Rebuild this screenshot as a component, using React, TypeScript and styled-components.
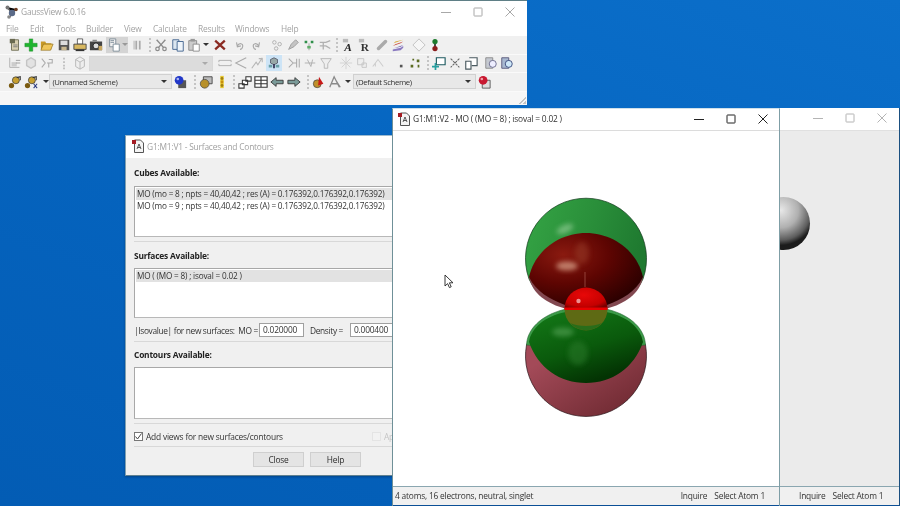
import * as React from "react";
import styled, { createGlobalStyle } from "styled-components";

const GlobalStyle = createGlobalStyle`
  html, body {
    margin: 0;
    padding: 0;
    background: #0563bd;
    overflow: hidden;
  }
  * {
    box-sizing: border-box;
  }
`;

const Desktop = styled.div`
  position: relative;
  width: 900px;
  height: 506px;
  overflow: hidden;
  background: linear-gradient(200deg, #0b6fca 0%, #0564bf 50%, #035cb4 100%);
  font-family: "Open Sans", "Noto Sans", sans-serif;
  font-size: 8.4px;
  letter-spacing: -0.2px;
  color: #2b2b2b;
  filter: blur(0.35px);
`;

/* windows on a desktop: the place is the content */
const Window = styled.div<{ $x: number; $y: number; $w: number; $h: number; $z: number }>`
  position: absolute;
  left: ${(p) => p.$x}px;
  top: ${(p) => p.$y}px;
  width: ${(p) => p.$w}px;
  height: ${(p) => p.$h}px;
  z-index: ${(p) => p.$z};
  display: flex;
  flex-direction: column;
  overflow: hidden;
  background: #f0f0f0;
`;

const MainWindow = styled(Window)`
  border-top: 1px solid #5f7f86;
  background: #f5f5f5;
`;

const ViewWindow = styled(Window)`
  border-left: 1px solid #6f9098;
  border-right: 1px solid #7f9ea6;
  border-top: 1px solid #cfe0ea;
  background: #fff;
`;

const BackWindow = styled(Window)`
  background: #ebebeb;
  border-right: 1px solid #1a4f80;
`;

const DialogWindow = styled(Window)`
  border-left: 1px solid #7fa0b0;
  border-top: 1px solid #9dbbd0;
  border-bottom: 1px solid #5f8090;
  box-shadow: 0 1px 2px rgba(0, 30, 70, 0.4);
`;

const TitleBar = styled.div<{ $h: number; $pad: number; $pb?: number; $active?: boolean }>`
  flex: none;
  height: ${(p) => p.$h}px;
  padding-left: ${(p) => p.$pad}px;
  padding-bottom: ${(p) => p.$pb ?? 0}px;
  display: flex;
  align-items: center;
  gap: 3px;
  background: #fff;
  color: ${(p) => (p.$active ? "#333" : "#a0a0a0")};
`;

const TitleText = styled.span`
  flex: 1;
  white-space: nowrap;
`;

const Controls = styled.div<{ $gap: number; $right: number; $color: string }>`
  display: flex;
  align-items: center;
  gap: ${(p) => p.$gap}px;
  margin-right: ${(p) => p.$right}px;
  color: ${(p) => p.$color};
`;

const MenuBar = styled.div`
  flex: none;
  height: 14px;
  padding-bottom: 2px;
  display: flex;
  align-items: center;
  background: #fff;
  color: #a3a3a3;
`;

const MenuItem = styled.span<{ $w: number }>`
  width: ${(p) => p.$w}px;
  padding-left: 6px;
  white-space: nowrap;
`;

const ToolRow = styled.div`
  flex: none;
  height: 18.5px;
  padding-left: 7px;
  display: flex;
  align-items: center;
  background: #f0f0f0;
  border-bottom: 1px solid #fafafa;
`;

const Slot = styled.div<{ $ml?: number; $hi?: boolean }>`
  flex: none;
  width: 16.2px;
  height: 16px;
  margin-left: ${(p) => p.$ml ?? 0}px;
  display: flex;
  align-items: center;
  justify-content: center;
  background: ${(p) => (p.$hi ? "#cde4f6" : "transparent")};
`;

const HiBox = styled.div`
  flex: none;
  width: 22px;
  height: 16px;
  margin-left: 2px;
  display: flex;
  align-items: center;
  background: #d4d4d4;
`;

const Grip = styled.div<{ $ml?: number }>`
  flex: none;
  width: 2px;
  height: 14px;
  margin-left: ${(p) => p.$ml ?? 0}px;
  border-left: 2px dotted #c4c4c4;
`;

const DropArrow = styled.div<{ $ml?: number; $color?: string }>`
  flex: none;
  width: 0;
  height: 0;
  margin-left: ${(p) => p.$ml ?? 0}px;
  border-left: 3px solid transparent;
  border-right: 3px solid transparent;
  border-top: 3px solid ${(p) => p.$color ?? "#333"};
`;

const Combo = styled.div<{ $w: number; $ml?: number; $off?: boolean }>`
  flex: none;
  width: ${(p) => p.$w}px;
  height: 15px;
  margin-left: ${(p) => p.$ml ?? 0}px;
  padding: 0 4px 0 2px;
  display: flex;
  align-items: center;
  justify-content: space-between;
  background: ${(p) => (p.$off ? "#dcdcdc" : "#e8e8e8")};
  border: 1px solid ${(p) => (p.$off ? "#d8d8d8" : "#d0d0d0")};
  font-size: 7.8px;
  letter-spacing: -0.4px;
  color: #333;
  white-space: nowrap;
`;

const Fill = styled.div`
  flex: 1;
  position: relative;
  background: #f6f6f6;
`;

const SizeGrip = styled.div`
  position: absolute;
  right: 1px;
  bottom: 1px;
  width: 8px;
  height: 8px;
  background: linear-gradient(135deg, transparent 55%, #c4c4c4 55%, #c4c4c4 65%, transparent 65%, transparent 78%, #c4c4c4 78%);
`;

const DialogBody = styled.div`
  flex: 1;
  padding: 0 0 0 8px;
  display: flex;
  flex-direction: column;
`;

const GroupTitle = styled.div<{ $mt: number }>`
  margin-top: ${(p) => p.$mt}px;
  height: 12px;
  line-height: 12px;
  font-weight: 700;
  color: #222;
`;

const ListBox = styled.div<{ $h: number; $mt: number }>`
  flex: none;
  width: 270px;
  height: ${(p) => p.$h}px;
  margin-top: ${(p) => p.$mt}px;
  padding: 1px;
  background: #fff;
  border: 1px solid #a8a8a8;
  border-right: none;
  border-bottom-color: #b8b8b8;
`;

const ListRow = styled.div<{ $sel?: boolean }>`
  height: 12px;
  line-height: 12px;
  padding-left: 1px;
  white-space: nowrap;
  background: ${(p) => (p.$sel ? "#e2e2e2" : "transparent")};
  font-size: 8.2px;
  letter-spacing: -0.18px;
  color: #333;
`;

const Rule = styled.div<{ $mt: number }>`
  flex: none;
  width: 260px;
  height: 1px;
  margin-top: ${(p) => p.$mt}px;
  background: #d8d8d8;
`;

const IsoRow = styled.div`
  flex: none;
  height: 14px;
  margin-top: 5px;
  display: flex;
  align-items: center;
  white-space: nowrap;
  color: #333;
`;

const IsoLabel = styled.span<{ $w: number; $pl?: number }>`
  flex: none;
  width: ${(p) => p.$w}px;
  padding-left: ${(p) => p.$pl ?? 0}px;
  letter-spacing: -0.35px;
`;

const NumberBox = styled.div`
  flex: none;
  width: 45px;
  height: 14px;
  padding-left: 3px;
  line-height: 12px;
  background: #fff;
  border: 1px solid #a0a0a0;
`;

const CheckRow = styled.div`
  flex: none;
  height: 10px;
  margin-top: 7px;
  display: flex;
  align-items: center;
  gap: 3px;
  white-space: nowrap;
`;

const CheckBox = styled.div<{ $off?: boolean }>`
  flex: none;
  width: 9px;
  height: 9px;
  display: flex;
  align-items: center;
  justify-content: center;
  background: ${(p) => (p.$off ? "#f2f2f2" : "#fff")};
  border: 1px solid ${(p) => (p.$off ? "#e4e4e4" : "#777")};
`;

const CheckText = styled.span<{ $w?: number; $off?: boolean }>`
  flex: none;
  width: ${(p) => (p.$w ? `${p.$w}px` : "auto")};
  color: ${(p) => (p.$off ? "#c4c4c4" : "#333")};
`;

const ButtonRow = styled.div`
  flex: none;
  margin-top: 5px;
  padding-left: 119px;
  display: flex;
  gap: 6px;
`;

const Button = styled.div`
  width: 51px;
  height: 15px;
  line-height: 13px;
  text-align: center;
  background: #e4e4e4;
  border: 1px solid #cfcfcf;
`;

const ViewCanvas = styled.div`
  flex: 1;
  position: relative;
  background: #fff;
  border-top: 1px solid #dcdcdc;
`;

const BackCanvas = styled.div`
  flex: 1;
  position: relative;
  background: #ebebeb;
  border-top: 1px solid #e0e0e0;
`;

const StatusBar = styled.div<{ $pl: number }>`
  flex: none;
  height: 20px;
  padding: 0 14px 2px ${(p) => p.$pl}px;
  display: flex;
  align-items: center;
  background: #f0f0f0;
  border-top: 1px solid #8aa6b0;
  border-bottom: 1px solid #0b4f96;
  color: #333;
  white-space: nowrap;
`;

const StatusLeft = styled.span`
  flex: 1;
`;

const StatusCell = styled.span<{ $ml: number }>`
  margin-left: ${(p) => p.$ml}px;
`;

const MoleculeSvg = styled.svg`
  position: absolute;
  left: 119px;
  top: 37px;
  width: 280px;
  height: 300px;
`;

const AtomSvg = styled.svg`
  position: absolute;
  left: 0;
  top: 59px;
  width: 40px;
  height: 70px;
`;

const Cursor = styled.svg`
  position: absolute;
  left: 444px;
  top: 274px;
  z-index: 9;
`;

const Icon16 = ({ children }: { children: React.ReactNode }) => (
  <svg width="14" height="14" viewBox="0 0 16 16" fill="none">
    {children}
  </svg>
);

const Molecule3 = (
  <>
    <circle cx="4" cy="12" r="3" fill="#7a5a10" />
    <circle cx="9" cy="6" r="4" fill="#c8a030" stroke="#333" strokeWidth="0.8" />
    <path d="M10 3l4-1v4" stroke="#333" strokeWidth="1.2" />
  </>
);

const icons: Record<string, React.ReactNode> = {
  newdoc: (
    <>
      <path d="M4 2h8v12H4z" fill="#d8cfb0" stroke="#6a6a50" />
      <path d="M2 1h6v5H2z" fill="#6a6a50" />
      <path d="M6 8h5M6 10h5" stroke="#777" />
    </>
  ),
  plus: <path d="M6 1h4v5h5v4h-5v5H6v-5H1V6h5z" fill="#1fb52f" stroke="#128020" strokeWidth="0.5" />,
  folder: (
    <>
      <path d="M1 4h5l1 2h6v7H1z" fill="#c89a28" />
      <path d="M4 7h11l-3 7H1z" fill="#efc65a" stroke="#8a6a18" strokeWidth="0.7" />
    </>
  ),
  save: (
    <>
      <path d="M2 2h12v12H2z" fill="#555" />
      <path d="M4 3h8v5H4z" fill="#ddd" />
      <path d="M5 10h6v4H5z" fill="#c9b890" />
    </>
  ),
  print: (
    <>
      <path d="M5 1h6v6H5z" fill="#fff" stroke="#555" />
      <path d="M1 7h14v6H1z" fill="#d8b860" stroke="#444" />
      <path d="M3 13h10v2H3z" fill="#333" />
    </>
  ),
  camera: (
    <>
      <path d="M1 4h14v10H1z" fill="#444" />
      <circle cx="8" cy="9" r="3.4" fill="#ddd" stroke="#222" />
      <path d="M4 2h5v2H4z" fill="#888" />
      <path d="M11 9h4v5h-4z" fill="#c9a860" />
    </>
  ),
  graydoc: (
    <>
      <path d="M3 1h7v9H3z" fill="#f0f0f0" stroke="#7a8a96" />
      <path d="M7 7h7v8H7z" fill="#fff" stroke="#7a8a96" />
      <path d="M4 3h4M4 5h4" stroke="#7a8a96" />
    </>
  ),
  pause: <path d="M5 3h2v10H5zM9 3h2v10H9zM3 3h1v10H3z" fill="#aaa" />,
  scissors: (
    <>
      <path d="M3 2l8 9M13 2l-8 9" stroke="#8c8c8c" strokeWidth="1.6" />
      <circle cx="4" cy="12.5" r="2" stroke="#8c8c8c" strokeWidth="1.4" />
      <circle cx="12" cy="12.5" r="2" stroke="#8c8c8c" strokeWidth="1.4" />
    </>
  ),
  copy: (
    <>
      <path d="M2 2h7v11H2z" fill="#dbe6f0" stroke="#3c5f8c" />
      <path d="M7 4h7v11H7z" fill="#eef4fa" stroke="#3c5f8c" />
    </>
  ),
  paste: (
    <>
      <path d="M2 3h9v11H2z" fill="#ccc" stroke="#888" />
      <path d="M4 1h5v3H4z" fill="#999" />
      <path d="M7 7h7v8H7z" fill="#fff" stroke="#888" />
    </>
  ),
  cross: <path d="M2.5 3l11 10M13.5 3l-11 10" stroke="#8a2a22" strokeWidth="2.6" />,
  undo: <path d="M4 5l1 5 4-1M5 9c2-4 7-3 6 1-.3 2-2 3-3 3" stroke="#a8a8a8" strokeWidth="1.3" />,
  redo: <path d="M12 5l-1 5-4-1M11 9C9 5 4 6 5 10c.3 2 2 3 3 3" stroke="#a8a8a8" strokeWidth="1.3" />,
  atoms: (
    <>
      <circle cx="5" cy="5" r="2" stroke="#aaa" />
      <circle cx="11" cy="7" r="2" stroke="#aaa" />
      <circle cx="7" cy="12" r="2" stroke="#aaa" />
    </>
  ),
  brush: <path d="M3 13l3-6 5-5 3 3-5 5z" fill="#c4c4c4" stroke="#999" />,
  greendots: (
    <>
      <path d="M3 3h3v3H3zM10 3h3v3h-3z" fill="#2f8f4a" />
      <path d="M7 6h2v8H7z" fill="#c8c8c8" />
      <path d="M6 9h4v3H6z" fill="#5fae6a" />
    </>
  ),
  fork: <path d="M2 5h7l5-2M2 9h7l5 3M6 5v8" stroke="#b0b0b0" strokeWidth="1.5" />,
  letterA: (
    <>
      <path d="M1 1h6v4H1z" fill="#bbb" />
      <text x="2.5" y="14.5" fontFamily="Liberation Serif" fontWeight="700" fontStyle="italic" fontSize="13" fill="#222">
        A
      </text>
    </>
  ),
  letterR: (
    <>
      <path d="M1 1h6v4H1z" fill="#bbb" />
      <text x="3" y="14.5" fontFamily="Liberation Serif" fontWeight="700" fontSize="13" fill="#333">
        R
      </text>
    </>
  ),
  chain: <path d="M4 12l8-8" stroke="#aaa" strokeWidth="4" strokeLinecap="round" />,
  layers: (
    <>
      <path d="M2 12l9-2 3-2-9 3z" fill="#6a5ab0" />
      <path d="M2 9l9-3 3-2-9 3z" fill="#c8483a" />
      <path d="M3 6l8-3 3-1-9 2z" fill="#d8a838" />
      <path d="M2 13l9-2 3-2v2l-3 3-9 1z" fill="#8a7ac0" />
    </>
  ),
  diamond: <path d="M8 1l7 7-7 7-7-7z" fill="#f6f6f6" stroke="#bdbdbd" />,
  bead: (
    <>
      <path d="M7 3h2v10H7z" fill="#333" />
      <circle cx="8" cy="4" r="3" fill="#1c7a2c" />
      <circle cx="8" cy="12" r="3" fill="#8a1c1c" />
    </>
  ),
  fragment: (
    <>
      <path d="M2 2v11h11" stroke="#aaa" />
      <path d="M4 7h6v5H4z" fill="#ccc" />
      <path d="M9 5h5M9 8h5" stroke="#999" />
    </>
  ),
  ring: <path d="M8 2l5 3v6l-5 3-5-3V5z" fill="#e2e2e2" stroke="#c4c4c4" strokeWidth="1.6" />,
  bondR: <path d="M2 3l4 5-4 5M8 8h2M10 4h4v4h-4v5" stroke="#aaa" strokeWidth="1.2" />,
  vdots: <path d="M7 2h2v2H7zM7 6h2v2H7zM7 10h2v2H7zM7 13h2v2H7z" fill="#bbb" />,
  cube: <path d="M3 4l5-3 5 3v8l-5 3-5-3zM8 7v8M3 4l5 3 5-3" fill="#eee" stroke="#b4b4b4" />,
  dist: <path d="M1 5h14M1 11h14M1 5v2M15 5v2M1 9v2M15 9v2" stroke="#aaa" />,
  angle: <path d="M14 2L2 8l12 6" stroke="#aaa" strokeWidth="1.2" />,
  dihedral: <path d="M2 14l5-7 2 3 5-8M10 3h4v4" stroke="#b4b4b4" strokeWidth="1.2" />,
  highlight: (
    <>
      <path d="M8 2l4 2v4l-4 2-4-2V4z" fill="#98a8a8" stroke="#445" strokeWidth="0.8" />
      <path d="M2 10h4v3H2zM10 10h4v3h-4z" fill="#6aa0a8" />
      <path d="M7 9h2v5H7z" fill="#335" />
    </>
  ),
  flip: <path d="M2 3l5 5-5 5M14 3v10M11 3v10M7 8h4" stroke="#aaa" strokeWidth="1.2" />,
  arrowsplit: <path d="M2 8h12M5 4l4 8M11 4l-2 8" stroke="#aaa" />,
  funnel: <path d="M2 3h12l-4 6v5H6V9z" fill="#eee" stroke="#b4b4b4" />,
  star: <path d="M8 1v14M1 8h14M3 3l10 10M13 3L3 13" stroke="#d0d0d0" />,
  squareDoc: <path d="M3 3h7v7H3zM8 8h5v5H8z" fill="#eee" stroke="#c4c4c4" />,
  sketch: <path d="M2 12l6-8 6 8M5 12V8" stroke="#cccccc" strokeWidth="1.2" />,
  dot: <path d="M9 10h3v3H9z" fill="#555" />,
  sparkle: <path d="M3 10h3v3H3zM10 4h3v3h-3zM5 3h2v2H5zM11 10h2v3h-2z" fill="#5a6a20" />,
  screenAdd: (
    <>
      <path d="M5 2h10v8H5z" fill="#fff" stroke="#1d5a60" strokeWidth="1.3" />
      <path d="M3 8h2v3h3v2H5v3H3v-3H0v-2h3z" fill="#29a0a0" />
    </>
  ),
  cross2: <path d="M3 3l10 10M13 3L3 13" stroke="#666" strokeWidth="1.2" strokeDasharray="3 1" />,
  screens: <path d="M2 6h6v9H2zM6 2h9v9H9" fill="#fff" stroke="#4a5a60" strokeWidth="1.3" />,
  magDoc: (
    <>
      <path d="M2 2h8v12H2z" fill="#c4c8d0" stroke="#888" />
      <circle cx="10" cy="9" r="4" fill="#eef" stroke="#668" />
    </>
  ),
  magDocBlue: (
    <>
      <path d="M2 2h8v12H2z" fill="#a8b8d0" stroke="#557" />
      <circle cx="10" cy="9" r="4" fill="#cfe8f8" stroke="#347" />
    </>
  ),
  gold: Molecule3,
  goldx: (
    <>
      {Molecule3}
      <path d="M11 10l4 5M15 10l-4 5" stroke="#2a3a80" strokeWidth="1.2" />
    </>
  ),
  blueball: (
    <>
      <path d="M6 6h9v9H6z" fill="#555" />
      <circle cx="7" cy="6" r="5" fill="#2238c8" />
      <circle cx="5.5" cy="4.5" r="1.5" fill="#a8b4f0" />
    </>
  ),
  redball: (
    <>
      <path d="M6 6h9v9H6z" fill="#ddd" stroke="#555" />
      <circle cx="7" cy="6" r="5" fill="#c81830" />
      <circle cx="5.5" cy="4.5" r="1.5" fill="#f0a0a8" />
    </>
  ),
  goldscreen: (
    <>
      <path d="M5 2h10v8H5z" fill="#bbb" stroke="#444" />
      <circle cx="6.5" cy="10" r="5" fill="#b8902a" stroke="#444" strokeWidth="0.8" />
    </>
  ),
  light: (
    <>
      <path d="M6 1h4v14H6z" fill="#e8c830" />
      <circle cx="8" cy="4" r="1.6" fill="#a08010" />
      <circle cx="8" cy="8" r="1.6" fill="#c89010" />
      <circle cx="8" cy="12" r="1.6" fill="#a08010" />
    </>
  ),
  stairs: <path d="M1 10h6v5H1zM5 6h6v5H5zM9 2h6v5H9z" fill="#fff" stroke="#333" strokeWidth="1.2" />,
  grid: <path d="M1 2h14v12H1zM1 6h14M1 10h14M8 2v12" fill="#fff" stroke="#333" strokeWidth="1.3" />,
  left: <path d="M1 8l6-5v3h8v4H7v3z" fill="#7a9a98" stroke="#333" />,
  right: <path d="M15 8L9 3v3H1v4h8v3z" fill="#7a9a98" stroke="#333" />,
  cone: (
    <>
      <circle cx="6" cy="10" r="4.5" fill="#c0902a" stroke="#444" strokeWidth="0.8" />
      <path d="M8 2l5 8-6 2z" fill="#c81818" />
    </>
  ),
  grayA: <path d="M2 14L7 2l6 12M4 10h7M9 6l5 8" stroke="#8a8a8a" strokeWidth="1.5" />
};

const Ico = ({ n }: { n: string }) => <Icon16>{icons[n]}</Icon16>;

const WinControls = ({ color, gap, right }: { color: string; gap: number; right: number }) => (
  <Controls $gap={gap} $right={right} $color={color}>
    <svg width="10" height="10" viewBox="0 0 10 10">
      <path d="M0 5.5h10" stroke="currentColor" strokeWidth="1" />
    </svg>
    <svg width="10" height="10" viewBox="0 0 10 10" fill="none">
      <rect x="1" y="1" width="8" height="8" rx="0.5" stroke="currentColor" strokeWidth="1" />
    </svg>
    <svg width="10" height="10" viewBox="0 0 10 10">
      <path d="M0.5 0.5l9 9M9.5 0.5l-9 9" stroke="currentColor" strokeWidth="1" />
    </svg>
  </Controls>
);

const DocIcon = () => (
  <svg width="12" height="14" viewBox="0 0 12 14" fill="none">
    <path d="M2.5 1h6l3 3v9.5h-9z" fill="#f4f4f4" stroke="#555" />
    <path d="M5 10l2-5 2 5M5.6 8.5h2.8" stroke="#333" strokeWidth="0.8" />
    <rect x="0" y="1" width="4" height="4" fill="#a51c24" />
  </svg>
);

const AppLogo = () => (
  <svg width="13" height="14" viewBox="0 0 13 14">
    <path d="M2 2l5 6 4-4M5 12l2-4" stroke="#555" strokeWidth="1.4" />
    <circle cx="2.5" cy="2.5" r="2" fill="#777" />
    <circle cx="7" cy="8" r="3.2" fill="#5a6a88" />
    <circle cx="11" cy="4.5" r="1.8" fill="#6a3a20" />
    <circle cx="4" cy="12" r="1.8" fill="#8a8a8a" />
  </svg>
);

const menus: [string, number][] = [
  ["File", 24],
  ["Edit", 26],
  ["Tools", 30],
  ["Builder", 38],
  ["View", 29],
  ["Calculate", 45],
  ["Results", 37],
  ["Windows", 46],
  ["Help", 40]
];

const Molecule = () => (
  <MoleculeSvg viewBox="512 168 280 300">
    <defs>
      <linearGradient id="topGreen" x1="0" y1="0" x2="1" y2="0.3">
        <stop offset="0" stopColor="#35a545" />
        <stop offset="0.55" stopColor="#2a8f3a" />
        <stop offset="1" stopColor="#1f7a30" />
      </linearGradient>
      <radialGradient id="topRed" cx="0.3" cy="0.3" r="0.8">
        <stop offset="0" stopColor="#8a1a10" />
        <stop offset="0.5" stopColor="#5e0502" />
        <stop offset="1" stopColor="#2a0000" />
      </radialGradient>
      <linearGradient id="lowGreen" x1="0" y1="0" x2="0.5" y2="1">
        <stop offset="0" stopColor="#147a18" />
        <stop offset="0.6" stopColor="#0a5a0c" />
        <stop offset="1" stopColor="#033303" />
      </linearGradient>
      <linearGradient id="lowRed" x1="0.1" y1="0.3" x2="0.8" y2="1">
        <stop offset="0" stopColor="#a34a58" />
        <stop offset="1" stopColor="#6f2a32" />
      </linearGradient>
      <radialGradient id="ballTop" cx="0.45" cy="0.35" r="0.7">
        <stop offset="0" stopColor="#e80808" />
        <stop offset="0.75" stopColor="#c40000" />
        <stop offset="1" stopColor="#7a0000" />
      </radialGradient>
      <filter id="soft" x="-50%" y="-50%" width="200%" height="200%">
        <feGaussianBlur stdDeviation="2.4" />
      </filter>
    </defs>

    {/* lower lobe */}
    <path
      d="M526.5 345A60.5 60.5 0 1 0 645.5 345L643 340L529 340Z"
      fill="url(#lowRed)"
      stroke="#2a1418"
      strokeWidth="0.7"
    />
    <path
      d="M526.5 345C527 330 540 315 566 309L606 309C632 315 645 330 645.5 345L586 350Z"
      fill="#3c9a48"
      stroke="#1e5a2a"
      strokeWidth="0.5"
    />
    <path
      d="M529 342C531 328 545 316 566 312C580 318 592 318 606 312C627 316 641 328 643 342C634 368 612 383 586 383C560 383 538 368 529 342Z"
      fill="url(#lowGreen)"
    />
    <ellipse cx="563" cy="332" rx="11" ry="4.5" fill="#6fb86f" opacity="0.45" filter="url(#soft)" />
    <ellipse cx="578" cy="353" rx="10" ry="12" fill="#2a7a2a" opacity="0.55" filter="url(#soft)" />

    {/* upper lobe */}
    <path
      d="M529 279A60.5 60.5 0 1 1 643 279C636 295 622 302 607 307L565 307C550 302 536 295 529 279Z"
      fill="url(#topGreen)"
      stroke="#10381a"
      strokeWidth="0.7"
    />
    <path d="M529 277C532 294 548 304 565 308.5L607 308.5C624 304 640 294 643 277Z" fill="#824850" />
    <path
      d="M529 277C535 250 560 233 586 233C612 233 637 250 643 277C636 292 622 299 607 305L565 305C550 299 536 292 529 277Z"
      fill="url(#topRed)"
    />
    <ellipse cx="565" cy="229" rx="9" ry="4" fill="#a8d8a8" opacity="0.55" filter="url(#soft)" transform="rotate(-25 565 229)" />
    <ellipse cx="567" cy="266" rx="11" ry="4.5" fill="#d8a088" opacity="0.75" filter="url(#soft)" />
    <ellipse cx="582" cy="253" rx="7" ry="11" fill="#a04a30" opacity="0.4" filter="url(#soft)" />
    <path d="M585 272v15" stroke="#a85a50" strokeWidth="1" opacity="0.7" />

    {/* oxygen at the centre */}
    <path d="M564.5 309A21.5 21.5 0 0 1 607.5 309Z" fill="url(#ballTop)" />
    <path d="M564.5 309A21.5 21.5 0 0 0 607.5 309Z" fill="#5e6a14" />
    <path d="M570 323A21.5 21.5 0 0 0 602 323C594 327 578 327 570 323Z" fill="#1c6e1c" opacity="0.8" />
    <rect x="564.5" y="307.5" width="43" height="2.5" fill="#e80000" />
    <circle cx="578.5" cy="301" r="2.2" fill="#f0a0a0" opacity="0.9" />
  </MoleculeSvg>
);

const Atom = () => (
  <AtomSvg viewBox="0 0 40 70">
    <defs>
      <radialGradient id="atomG" cx="0.45" cy="0.25" r="0.66">
        <stop offset="0" stopColor="#e8e8e8" />
        <stop offset="0.5" stopColor="#b0b0b0" />
        <stop offset="0.85" stopColor="#5c5c5c" />
        <stop offset="1" stopColor="#1c1c1c" />
      </radialGradient>
    </defs>
    <circle cx="3.5" cy="33.5" r="26.5" fill="url(#atomG)" />
  </AtomSvg>
);

const App: React.FC = () => {
  return (
    <Desktop>
      <GlobalStyle />

      <MainWindow $x={0} $y={0} $w={527} $h={105} $z={1}>
        <TitleBar $h={21} $pad={5}>
          <AppLogo />
          <TitleText>GaussView 6.0.16</TitleText>
          <WinControls color="#a8a8a8" gap={22} right={12} />
        </TitleBar>
        <MenuBar>
          {menus.map(([label, w]) => (
            <MenuItem key={label} $w={w}>
              {label}
            </MenuItem>
          ))}
        </MenuBar>

        <ToolRow>
          <Slot><Ico n="newdoc" /></Slot>
          <Slot><Ico n="plus" /></Slot>
          <Slot><Ico n="folder" /></Slot>
          <Slot><Ico n="save" /></Slot>
          <Slot><Ico n="print" /></Slot>
          <Slot><Ico n="camera" /></Slot>
          <HiBox>
            <Slot><Ico n="graydoc" /></Slot>
            <DropArrow $color="#999" />
          </HiBox>
          <Slot $ml={2}><Ico n="pause" /></Slot>
          <Grip $ml={3} />
          <Slot $ml={2}><Ico n="scissors" /></Slot>
          <Slot><Ico n="copy" /></Slot>
          <Slot><Ico n="paste" /></Slot>
          <DropArrow $ml={1} />
          <Slot $ml={3}><Ico n="cross" /></Slot>
          <Slot $ml={4}><Ico n="undo" /></Slot>
          <Slot><Ico n="redo" /></Slot>
          <Slot $ml={4}><Ico n="atoms" /></Slot>
          <Slot><Ico n="brush" /></Slot>
          <Slot><Ico n="greendots" /></Slot>
          <Slot><Ico n="fork" /></Slot>
          <Grip $ml={3} />
          <Slot $ml={3}><Ico n="letterA" /></Slot>
          <Slot><Ico n="letterR" /></Slot>
          <Slot><Ico n="chain" /></Slot>
          <Slot><Ico n="layers" /></Slot>
          <Slot $ml={5}><Ico n="diamond" /></Slot>
          <Slot><Ico n="bead" /></Slot>
        </ToolRow>

        <ToolRow>
          <Slot><Ico n="fragment" /></Slot>
          <Slot><Ico n="ring" /></Slot>
          <Slot><Ico n="bondR" /></Slot>
          <Slot><Ico n="vdots" /></Slot>
          <Slot><Ico n="cube" /></Slot>
          <Combo $w={124} $ml={1} $off>
            <span />
            <DropArrow $color="#aaa" />
          </Combo>
          <Slot $ml={4}><Ico n="dist" /></Slot>
          <Slot><Ico n="angle" /></Slot>
          <Slot><Ico n="dihedral" /></Slot>
          <Slot $hi><Ico n="highlight" /></Slot>
          <Slot $ml={4}><Ico n="flip" /></Slot>
          <Slot><Ico n="arrowsplit" /></Slot>
          <Slot><Ico n="funnel" /></Slot>
          <Slot $ml={3.4}><Ico n="star" /></Slot>
          <Slot><Ico n="squareDoc" /></Slot>
          <Slot><Ico n="sketch" /></Slot>
          <Slot $ml={5}><Ico n="dot" /></Slot>
          <Slot><Ico n="sparkle" /></Slot>
          <Grip $ml={3} />
          <Slot $ml={2}><Ico n="screenAdd" /></Slot>
          <Slot><Ico n="cross2" /></Slot>
          <Slot><Ico n="screens" /></Slot>
          <Slot $ml={4}><Ico n="magDoc" /></Slot>
          <Slot><Ico n="magDocBlue" /></Slot>
        </ToolRow>

        <ToolRow>
          <Slot><Ico n="gold" /></Slot>
          <Slot><Ico n="goldx" /></Slot>
          <DropArrow $ml={4} />
          <Combo $w={123}>
            <span>(Unnamed Scheme)</span>
            <DropArrow />
          </Combo>
          <Slot><Ico n="blueball" /></Slot>
          <Grip $ml={5} />
          <Slot $ml={2}><Ico n="goldscreen" /></Slot>
          <Slot><Ico n="light" /></Slot>
          <Grip $ml={3} />
          <Slot $ml={2}><Ico n="stairs" /></Slot>
          <Slot><Ico n="grid" /></Slot>
          <Slot><Ico n="left" /></Slot>
          <Slot><Ico n="right" /></Slot>
          <Grip $ml={5} />
          <Slot $ml={2}><Ico n="cone" /></Slot>
          <Slot><Ico n="grayA" /></Slot>
          <DropArrow $ml={2} />
          <Combo $w={123} $ml={2}>
            <span>(Default Scheme)</span>
            <DropArrow />
          </Combo>
          <Slot><Ico n="redball" /></Slot>
        </ToolRow>
        <Fill>
          <SizeGrip />
        </Fill>
      </MainWindow>

      <DialogWindow $x={125} $y={135} $w={268} $h={341} $z={2}>
        <TitleBar $h={22} $pad={6} $pb={2}>
          <DocIcon />
          <TitleText>G1:M1:V1 - Surfaces and Contours</TitleText>
        </TitleBar>
        <DialogBody>
          <GroupTitle $mt={9}>Cubes Available:</GroupTitle>
          <ListBox $h={51} $mt={7}>
            <ListRow $sel>MO (mo = 8 ; npts = 40,40,42 ; res (A) = 0.176392,0.176392,0.176392)</ListRow>
            <ListRow>MO (mo = 9 ; npts = 40,40,42 ; res (A) = 0.176392,0.176392,0.176392)</ListRow>
          </ListBox>
          <Rule $mt={4} />
          <GroupTitle $mt={8}>Surfaces Available:</GroupTitle>
          <ListBox $h={50} $mt={6}>
            <ListRow $sel>MO ( (MO = 8) ; isoval = 0.02 )</ListRow>
          </ListBox>
          <IsoRow>
            <IsoLabel $w={125}>|Isovalue| for new surfaces:&nbsp; MO =</IsoLabel>
            <NumberBox>0.020000</NumberBox>
            <IsoLabel $w={46} $pl={6}>Density =</IsoLabel>
            <NumberBox>0.000400</NumberBox>
          </IsoRow>
          <Rule $mt={4} />
          <GroupTitle $mt={7}>Contours Available:</GroupTitle>
          <ListBox $h={52} $mt={6} />
          <Rule $mt={4} />
          <CheckRow>
            <CheckBox>
              <svg width="7" height="7" viewBox="0 0 7 7" fill="none">
                <path d="M0.5 3.5l2 2.5L6.5 0.5" stroke="#444" strokeWidth="1" />
              </svg>
            </CheckBox>
            <CheckText $w={223}>Add views for new surfaces/contours</CheckText>
            <CheckBox $off />
            <CheckText $off>Ap</CheckText>
          </CheckRow>
          <Rule $mt={5} />
          <ButtonRow>
            <Button>Close</Button>
            <Button>Help</Button>
          </ButtonRow>
        </DialogBody>
      </DialogWindow>

      <BackWindow $x={780} $y={108} $w={120} $h={398} $z={3}>
        <TitleBar $h={22} $pad={0} $pb={2}>
          <TitleText />
          <WinControls color="#b4b4b4" gap={22} right={12} />
        </TitleBar>
        <BackCanvas>
          <Atom />
        </BackCanvas>
        <StatusBar $pl={19}>
          <StatusCell $ml={0}>Inquire</StatusCell>
          <StatusCell $ml={7}>Select Atom 1</StatusCell>
        </StatusBar>
      </BackWindow>

      <ViewWindow $x={392} $y={108} $w={388} $h={398} $z={4}>
        <TitleBar $h={21} $pad={5} $pb={2} $active>
          <DocIcon />
          <TitleText>G1:M1:V2 - MO ( (MO = 8) ; isoval = 0.02 )</TitleText>
          <WinControls color="#222" gap={22} right={11} />
        </TitleBar>
        <ViewCanvas>
          <Molecule />
        </ViewCanvas>
        <StatusBar $pl={2}>
          <StatusLeft>4 atoms, 16 electrons, neutral, singlet</StatusLeft>
          <StatusCell $ml={0}>Inquire</StatusCell>
          <StatusCell $ml={7}>Select Atom 1</StatusCell>
        </StatusBar>
      </ViewWindow>

      <Cursor width="10" height="15" viewBox="0 0 10 15">
        <path d="M1 1v11l2.6-2.4 1.8 4 1.8-.8-1.8-4H9z" fill="#fff" stroke="#222" strokeWidth="0.9" />
      </Cursor>
    </Desktop>
  );
};

export default App;
